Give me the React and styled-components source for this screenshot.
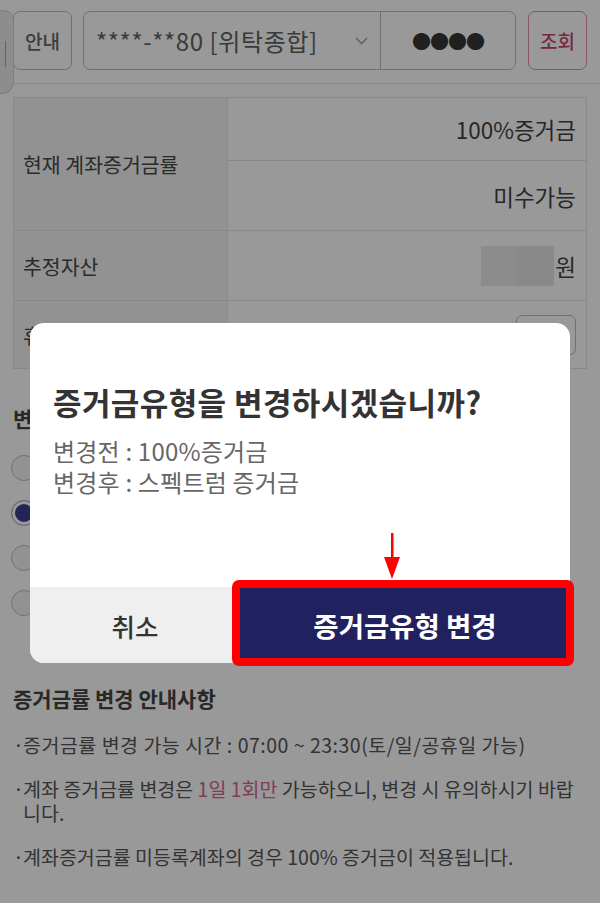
import React from 'react'
import styled, { createGlobalStyle } from 'styled-components'

const GlobalStyle = createGlobalStyle`
  html, body {
    margin: 0;
    padding: 0;
    background: #fff;
  }
  body {
    font-family: "Noto Sans CJK KR", "Noto Sans", sans-serif;
  }
  * {
    box-sizing: border-box;
  }
`

const FONT = `"Noto Sans CJK KR", "Noto Sans", sans-serif`

const Page = styled.div`
  position: relative;
  width: 600px;
  height: 903px;
  overflow: hidden;
  background: #fff;
  color: #444;
`

const Handle = styled.div`
  position: absolute;
  left: 0;
  top: 10px;
  width: 14px;
  height: 84px;
  background: #ececec;
  border: 1px solid #d2d2d2;
  border-left: none;
  border-radius: 0 10px 12px 0;

  &::after {
    content: '';
    position: absolute;
    left: 5px;
    top: 30px;
    width: 1px;
    height: 26px;
    background: #a5a5a5;
  }
`

const TopBar = styled.header`
  display: flex;
  align-items: flex-start;
  height: 84px;
  padding: 11px 13px 0;
  border-bottom: 1px solid #e4e4e4;
`

const OutlineButton = styled.button`
  flex: none;
  width: 59px;
  height: 59px;
  padding: 0;
  margin-left: ${p => p.$gap || 0}px;
  background: #fff;
  border: 1px solid ${p => (p.$accent ? '#e08cab' : '#bdbdbd')};
  border-radius: 7px;
  color: ${p => (p.$accent ? '#c9426f' : '#666')};
  font: 500 19px ${FONT};
`

const AccountSelect = styled.div`
  flex: none;
  width: 433px;
  height: 59px;
  margin-left: 11px;
  display: grid;
  grid-template-columns: 297px 1fr;
  border: 1px solid #bdbdbd;
  border-radius: 7px;
`

const AccountValue = styled.div`
  display: flex;
  align-items: center;
  justify-content: space-between;
  padding: 0 12px 0 12px;
  border-right: 1px solid #bdbdbd;
  color: #626262;
  font-size: 24px;
  letter-spacing: 0.6px;
  white-space: nowrap;
`

const Pin = styled.div`
  display: flex;
  align-items: center;
  justify-content: center;
  color: #363636;
  font-size: 19px;
  letter-spacing: -1px;
`

const InfoTable = styled.div`
  margin: 13px 13px 0;
  display: grid;
  grid-template-columns: 214px 1fr;
  grid-template-rows: 63px 70px 70px 68px;
  border: 1px solid #e4e4e4;
  border-bottom: none;
`

const Label = styled.div`
  grid-row: ${p => (p.$span ? 'span 2' : 'auto')};
  display: flex;
  align-items: center;
  padding-left: 9px;
  background: #f4f4f4;
  border-right: 1px solid #e4e4e4;
  border-bottom: 1px solid #e4e4e4;
  color: #484848;
  font-size: 20.5px;
`

const Value = styled.div`
  display: flex;
  align-items: center;
  justify-content: flex-end;
  padding-right: 10px;
  border-bottom: 1px solid #e4e4e4;
  color: #444;
  font-size: 22.5px;
`

const Masked = styled.span`
  display: inline-block;
  width: 73px;
  height: 40px;
  margin-right: 1px;
  background: linear-gradient(90deg, #e9e9e9 0 50%, #e4e4e4 50% 100%);
`

const SmallButton = styled.button`
  width: 60px;
  height: 40px;
  background: #fff;
  border: 1px solid #bdbdbd;
  border-radius: 6px;
`

const Section = styled.section`
  padding: 0 13px;
  margin-top: ${p => p.$top}px;
`

const SectionTitle = styled.h2`
  margin: 0;
  color: #444;
  font-size: 21px;
  font-weight: 700;
  line-height: ${p => p.$lh || 28}px;
`

const RadioList = styled.div`
  margin-top: 13px;
`

const RadioRow = styled.div`
  display: flex;
  align-items: center;
  height: 45px;
  margin-left: -2px;
`

const Radio = styled.span`
  flex: none;
  width: 26px;
  height: 26px;
  border-radius: 50%;
  border: 1.5px solid #bdbdbd;
  background: ${p => (p.$checked ? '#3e3d92' : '#f4f4f4')};
  box-shadow: ${p => (p.$checked ? 'inset 0 0 0 3px #fff' : 'none')};
`

const NoticeList = styled.ul`
  list-style: none;
  margin: 20px 0 0;
  padding: 0;
  display: flex;
  flex-direction: column;
  gap: 20px;
`

const NoticeItem = styled.li`
  position: relative;
  padding-left: 10px;
  color: #555;
  font-size: 19.5px;
  line-height: 24px;
  letter-spacing: ${p => p.$spread || 0}px;

  &::before {
    content: '·';
    position: absolute;
    left: 0;
    top: 0;
  }
`

const Accent = styled.span`
  color: #d9668f;
`

const Dim = styled.div`
  position: absolute;
  inset: 0;
  display: flex;
  justify-content: center;
  align-items: flex-start;
  padding-top: 323px;
  background: rgba(0, 0, 0, 0.4);
`

const DialogFrame = styled.div`
  position: relative;
  width: 540px;
`

const Dialog = styled.div`
  height: 340px;
  display: flex;
  flex-direction: column;
  background: #fff;
  border-radius: 14px;
  overflow: hidden;
`

const DialogBody = styled.div`
  flex: 1;
  padding: 59px 23px 0;
`

const DialogTitle = styled.h1`
  margin: 0;
  color: #333;
  font-size: 31px;
  font-weight: 700;
  line-height: 40px;
  letter-spacing: 0.4px;
`

const DialogText = styled.p`
  margin: 13px 0 0;
  color: #666;
  font-size: 24px;
  line-height: 31px;
  letter-spacing: 0.2px;
`

const Actions = styled.div`
  display: grid;
  grid-template-columns: 210px 1fr;
  height: 76px;
`

const ActionButton = styled.button`
  border: none;
  padding: 0;
  background: ${p => (p.$primary ? '#22215f' : '#efefef')};
  color: ${p => (p.$primary ? '#fff' : '#333')};
  font-family: ${FONT};
  font-size: ${p => (p.$primary ? 27.5 : 25.5)}px;
  font-weight: ${p => (p.$primary ? 700 : 500)};
`

const Highlight = styled.div`
  position: absolute;
  left: 202px;
  top: 257px;
  width: 342px;
  height: 86px;
  border: 8px solid #ff0000;
  border-radius: 7px;
  pointer-events: none;
`

const Arrow = styled.svg`
  position: absolute;
  left: 354px;
  top: 210px;
`

const Chevron = () => (
  <svg width="13" height="8" viewBox="0 0 13 8">
    <path d="M1 1l5.5 5.5L12 1" fill="none" stroke="#9a9a9a" strokeWidth="1.3" />
  </svg>
)

const options = [
  { id: 'full', checked: false },
  { id: 'spectrum', checked: true },
  { id: 'forty', checked: false },
  { id: 'thirty', checked: false },
]

export default function App() {
  return (
    <Page>
      <GlobalStyle />
      <Handle />
      <TopBar>
        <OutlineButton>안내</OutlineButton>
        <AccountSelect>
          <AccountValue>
            ****-**80 [위탁종합]
            <Chevron />
          </AccountValue>
          <Pin>●●●●</Pin>
        </AccountSelect>
        <OutlineButton $accent $gap={12}>조회</OutlineButton>
      </TopBar>

      <InfoTable>
        <Label $span>현재 계좌증거금률</Label>
        <Value>100%증거금</Value>
        <Value>미수가능</Value>
        <Label>추정자산</Label>
        <Value>
          <Masked />원
        </Value>
        <Label>휴대폰 인증</Label>
        <Value>
          <SmallButton />
        </Value>
      </InfoTable>

      <Section $top={35}>
        <SectionTitle>변경 증거금률</SectionTitle>
        <RadioList>
          {options.map(o => (
            <RadioRow key={o.id}>
              <Radio $checked={o.checked} />
            </RadioRow>
          ))}
        </RadioList>
      </Section>

      <Section $top={58}>
        <SectionTitle $lh={30}>증거금률 변경 안내사항</SectionTitle>
        <NoticeList>
          <NoticeItem $spread={0.5}>증거금률 변경 가능 시간 : 07:00 ~ 23:30(토/일/공휴일 가능)</NoticeItem>
          <NoticeItem>
            계좌 증거금률 변경은 <Accent>1일 1회만</Accent> 가능하오니, 변경 시 유의하시기 바랍
            <br />
            니다.
          </NoticeItem>
          <NoticeItem>계좌증거금률 미등록계좌의 경우 100% 증거금이 적용됩니다.</NoticeItem>
        </NoticeList>
      </Section>

      <Dim>
        <DialogFrame>
          <Dialog>
            <DialogBody>
              <DialogTitle>증거금유형을 변경하시겠습니까?</DialogTitle>
              <DialogText>
                변경전 : 100%증거금
                <br />
                변경후 : 스펙트럼 증거금
              </DialogText>
            </DialogBody>
            <Actions>
              <ActionButton>취소</ActionButton>
              <ActionButton $primary>증거금유형 변경</ActionButton>
            </Actions>
          </Dialog>
          <Highlight />
          <Arrow width="16" height="46" viewBox="0 0 16 46">
            <rect x="7" y="0" width="2.5" height="28" fill="#f00" />
            <path d="M0 24h16L8 46z" fill="#f00" />
          </Arrow>
        </DialogFrame>
      </Dim>
    </Page>
  )
}
